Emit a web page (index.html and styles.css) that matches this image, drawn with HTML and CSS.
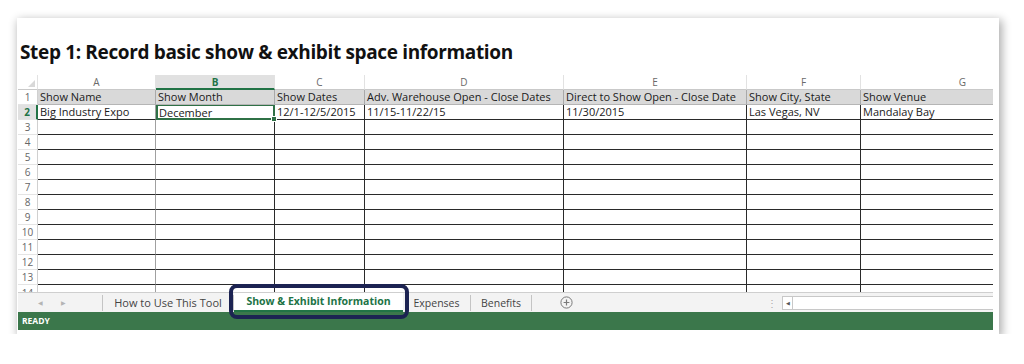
FILE: index.html
```html
<!DOCTYPE html>
<html lang="en">
<head>
<meta charset="utf-8">
<title>Step 1: Record basic show &amp; exhibit space information</title>
<link rel="stylesheet" href="styles.css">
</head>
<body>
<div class="card">
  <h1 class="title">Step 1: Record basic show &amp; exhibit space information</h1>
  <div class="sheet">
    <div class="grid">
      <div class="ch corner"><span class="tri"></span></div>
      <div class="ch">A</div>
      <div class="ch ch-sel">B</div>
      <div class="ch">C</div>
      <div class="ch">D</div>
      <div class="ch">E</div>
      <div class="ch">F</div>
      <div class="ch">G</div>

      <div class="rh">1</div>
      <div class="c hd">Show Name</div>
      <div class="c hd">Show Month</div>
      <div class="c hd">Show Dates</div>
      <div class="c hd">Adv. Warehouse Open - Close Dates</div>
      <div class="c hd">Direct to Show Open - Close Date</div>
      <div class="c hd">Show City, State</div>
      <div class="c hd">Show Venue</div>

      <div class="rh rh-sel">2</div>
      <div class="c d la">Big Industry Expo</div>
      <div class="c d sel">December<span class="handle"></span></div>
      <div class="c d">12/1-12/5/2015</div>
      <div class="c d">11/15-11/22/15</div>
      <div class="c d">11/30/2015</div>
      <div class="c d">Las Vegas, NV</div>
      <div class="c d">Mandalay Bay</div>

      <div class="rh">3</div><div class="c d la"></div><div class="c d"></div><div class="c d"></div><div class="c d"></div><div class="c d"></div><div class="c d"></div><div class="c d"></div>
      <div class="rh">4</div><div class="c d la"></div><div class="c d"></div><div class="c d"></div><div class="c d"></div><div class="c d"></div><div class="c d"></div><div class="c d"></div>
      <div class="rh">5</div><div class="c d la"></div><div class="c d"></div><div class="c d"></div><div class="c d"></div><div class="c d"></div><div class="c d"></div><div class="c d"></div>
      <div class="rh">6</div><div class="c d la"></div><div class="c d"></div><div class="c d"></div><div class="c d"></div><div class="c d"></div><div class="c d"></div><div class="c d"></div>
      <div class="rh">7</div><div class="c d la"></div><div class="c d"></div><div class="c d"></div><div class="c d"></div><div class="c d"></div><div class="c d"></div><div class="c d"></div>
      <div class="rh">8</div><div class="c d la"></div><div class="c d"></div><div class="c d"></div><div class="c d"></div><div class="c d"></div><div class="c d"></div><div class="c d"></div>
      <div class="rh">9</div><div class="c d la"></div><div class="c d"></div><div class="c d"></div><div class="c d"></div><div class="c d"></div><div class="c d"></div><div class="c d"></div>
      <div class="rh">10</div><div class="c d la"></div><div class="c d"></div><div class="c d"></div><div class="c d"></div><div class="c d"></div><div class="c d"></div><div class="c d"></div>
      <div class="rh">11</div><div class="c d la"></div><div class="c d"></div><div class="c d"></div><div class="c d"></div><div class="c d"></div><div class="c d"></div><div class="c d"></div>
      <div class="rh">12</div><div class="c d la"></div><div class="c d"></div><div class="c d"></div><div class="c d"></div><div class="c d"></div><div class="c d"></div><div class="c d"></div>
      <div class="rh">13</div><div class="c d la"></div><div class="c d"></div><div class="c d"></div><div class="c d"></div><div class="c d"></div><div class="c d"></div><div class="c d"></div>
      <div class="rh rh-cut">14</div><div class="c d la"></div><div class="c d"></div><div class="c d"></div><div class="c d"></div><div class="c d"></div><div class="c d"></div><div class="c d"></div>
    </div>
  </div>
  <div class="tabbar">
    <div class="nav"><span class="arr">&#9664;</span><span class="arr">&#9654;</span></div>
    <div class="tab tab1">How to Use This Tool</div>
    <div class="tab tab-active">Show &amp; Exhibit Information</div>
    <div class="tab tab3">Expenses</div>
    <div class="tab tab4">Benefits</div>
    <div class="plus">
      <svg width="13" height="13" viewBox="0 0 13 13"><circle cx="6.5" cy="6.5" r="5.6" fill="none" stroke="#7a7a7a" stroke-width="1"/><path d="M6.5 3.6v5.8M3.6 6.5h5.8" stroke="#7a7a7a" stroke-width="1.2"/></svg>
    </div>
    <div class="spacer"></div>
    <div class="dots">&#8942;</div>
    <div class="hscroll"><span class="hbtn">&#9664;</span></div>
  </div>
  <div class="status">READY</div>
  <div class="annot"></div>
</div>
</body>
</html>
```

FILE: styles.css
```css
* { box-sizing: border-box; }
html, body { margin: 0; padding: 0; background: #ffffff; }
body { font-family: "Open Sans", "Liberation Sans", sans-serif; }

.card {
  position: relative;
  margin: 18px 0 0 17px;
  width: 982px;
  height: 316px;
  background: #ffffff;
  box-shadow: 2px 3px 9px 1px rgba(0, 0, 0, 0.33);
  display: flex;
  flex-direction: column;
}

.title {
  margin: 0;
  height: 57px;
  padding: 22px 0 0 3px;
  font-family: "Open Sans", "Liberation Sans", sans-serif;
  font-weight: 700;
  font-size: 19px;
  line-height: 24px;
  letter-spacing: -0.35px;
  color: #111111;
  white-space: nowrap;
}

.sheet {
  margin-left: 1px;
  width: 975px;
  height: 217px;
  overflow: hidden;
  flex: none;
}

.grid {
  display: grid;
  grid-template-columns: 20px 118px 119px 90px 199px 183px 114px 204px;
  grid-template-rows: 15px;
  grid-auto-rows: 15px;
  width: 1047px;
}

.ch {
  font-size: 10px;
  line-height: 14px;
  color: #6a6a6a;
  text-align: center;
  background: #ffffff;
  border-right: 1px solid #e2e2e2;
  border-bottom: 1px solid #c9c9c9;
}
.ch-sel {
  background: #e1e1e1;
  color: #217346;
  font-weight: 700;
  border-bottom: 2px solid #217346;
}
.corner { position: relative; }
.tri {
  position: absolute;
  right: 2px;
  bottom: 2px;
  width: 0;
  height: 0;
  border-left: 7px solid transparent;
  border-bottom: 7px solid #d8d8d8;
}

.rh {
  font-size: 10px;
  line-height: 14px;
  color: #666666;
  text-align: center;
  border-right: 1px solid #d0d0d0;
  border-bottom: 1px solid #e4e4e4;
  background: #ffffff;
}
.rh-cut { line-height: 16px; }
.rh-sel {
  background: #e1e1e1;
  color: #217346;
  font-weight: 700;
  border-right: 2px solid #217346;
}

.c {
  font-size: 11px;
  line-height: 14px;
  color: #1a1a1a;
  padding-left: 2px;
  white-space: nowrap;
  overflow: hidden;
}
.hd {
  background: #d9d9d9;
  border-right: 1px solid #a9a9a9;
  border-bottom: 1px solid #b5b5b5;
}
.d {
  border-right: 1px solid #2a2a2a;
  border-bottom: 1px solid #2a2a2a;
}
.d.la { border-right-color: #a0a0a0; }

.sel {
  position: relative;
  overflow: visible;
  border: 2px solid #2f7146;
  border-top-width: 1px;
  padding-left: 1px;
}
.handle {
  position: absolute;
  right: -4px;
  bottom: -4px;
  width: 6px;
  height: 6px;
  background: #2f7146;
  border: 1px solid #ffffff;
}

.tabbar {
  flex: none;
  margin-left: 1px;
  width: 975px;
  height: 20px;
  display: flex;
  align-items: center;
  background: #f3f3f3;
  border-top: 1px solid #cfcfcf;
  font-size: 11px;
  color: #444444;
}
.nav {
  width: 85px;
  height: 16px;
  border-right: 1px solid #c4c4c4;
  display: flex;
  align-items: center;
  padding-left: 20px;
  gap: 18px;
}
.arr { font-size: 6px; color: #b4b4b4; line-height: 16px; }
.tab {
  height: 16px;
  line-height: 16px;
  text-align: center;
  white-space: nowrap;
  border-right: 1px solid #c4c4c4;
}
.tab1 { width: 131px; }
.tab-active {
  width: 169px;
  height: 19px;
  align-self: flex-start;
  line-height: 17px;
  background: #ffffff;
  color: #217346;
  font-weight: 700;
  font-size: 10.5px;
  letter-spacing: 0;
  border-right: none;
  border-bottom: 2px solid #217346;
}
.tab3 { width: 68px; font-size: 10.5px; }
.tab4 { width: 61px; font-size: 10.5px; }
.plus { margin-left: 28px; width: 13px; height: 13px; display: flex; }
.spacer { flex: 1; }
.dots { width: 10px; color: #a8a8a8; font-size: 10px; line-height: 12px; margin-right: 5px; }
.hscroll {
  width: 211px;
  height: 14px;
  border: 1px solid #c8c8c8;
  border-right: none;
  background: #ffffff;
  display: flex;
}
.hbtn {
  width: 10px;
  height: 12px;
  border-right: 1px solid #c8c8c8;
  font-size: 5px;
  line-height: 12px;
  text-align: center;
  color: #555555;
}

.status {
  flex: none;
  margin-left: 1px;
  width: 975px;
  height: 18px;
  background: #3b774b;
  color: #ffffff;
  font-size: 8.5px;
  font-weight: 700;
  line-height: 18px;
  padding-left: 4px;
}

.annot {
  position: absolute;
  left: 212px;
  top: 266px;
  width: 180px;
  height: 35px;
  border: 4px solid #1c2352;
  border-radius: 8px;
}
```
